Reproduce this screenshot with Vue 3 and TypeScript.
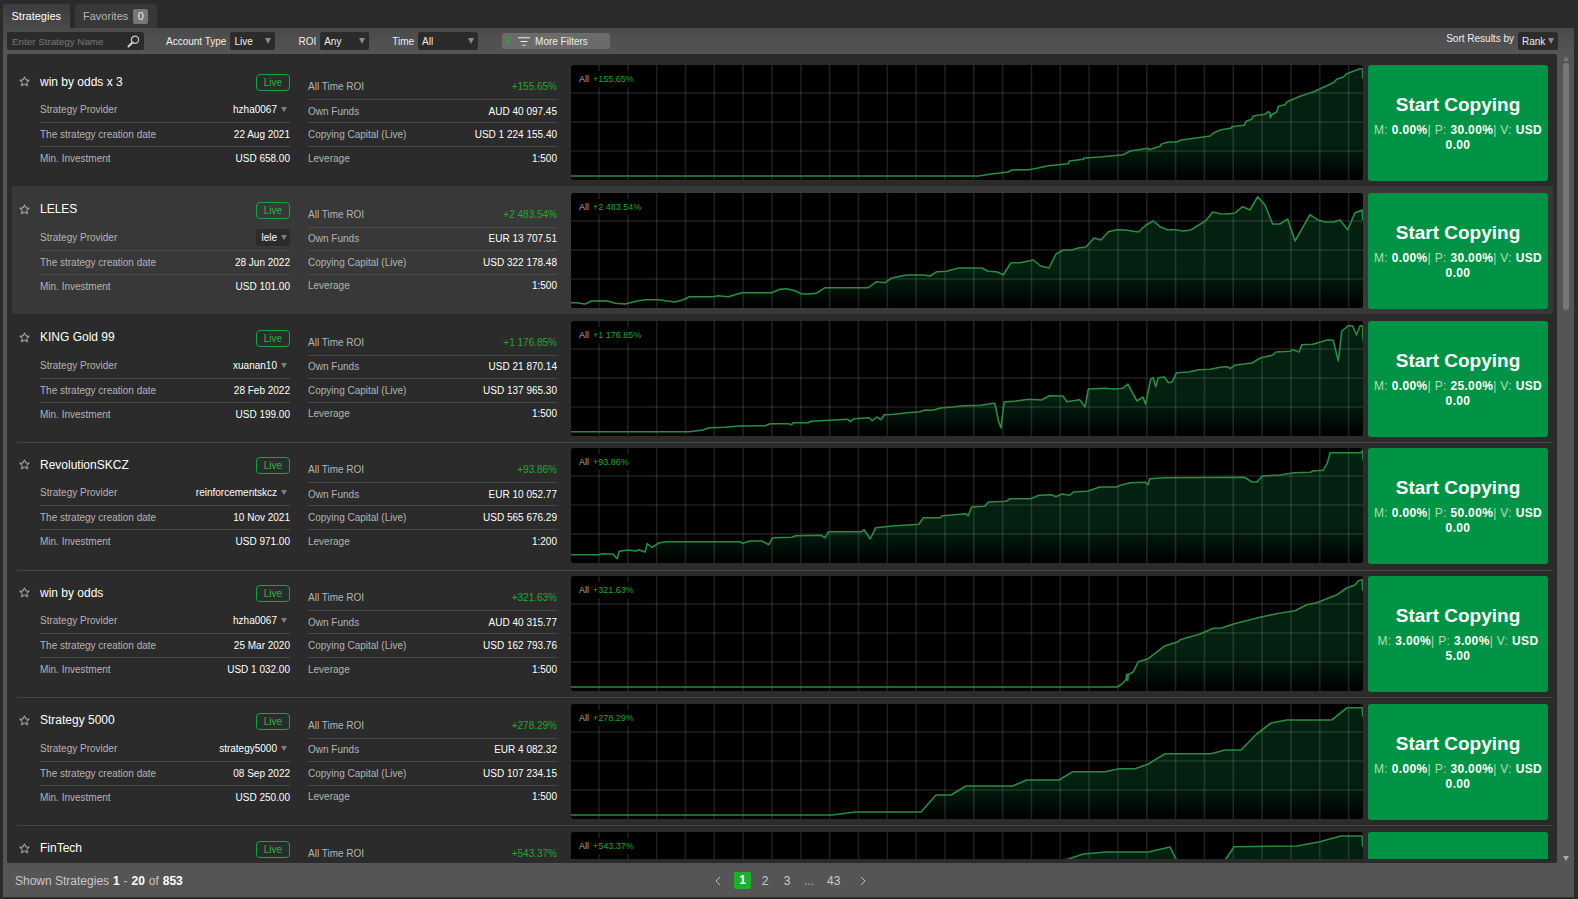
<script setup lang="ts">
type Pt = [number, number]

const seg = (s: string, sx: number, ox: number, sy: number, oy: number): Pt[] =>
  s.split(';').map((p) => {
    const [a, b] = p.split(',').map(Number)
    return [a / sx + ox, b / sy + oy] as Pt
  })

const line1: Pt[] = [
  [0, 111],
  ...seg('0,342;55,342;100,335;145,330;155,324;205,323;235,318;265,311;325,305;328,297;370,292;372,288;420,285;490,278;510,267;565,259;568,263;600,253;605,246;625,240;650,240;660,235;750,222;762,212;780,204;815,198;815,194;852,190;858,178;875,172;880,162;915,157;925,149;930,152;931,168;935,158;950,150;955,133;975,128;980,120;1020,103;1065,88;1085,78;1120,62;1130,52;1150,45;1160,35;1200,20;1208,20;1208,50', 3, 389, 3, -3)
]
const line2: Pt[] = [
  ...seg('0,338;20,338;45,342;65,333;110,332;135,340;165,342;205,332;230,329;265,329;315,336;340,329;358,320;430,320;445,317;475,320;515,308;605,308;630,298;650,296;675,302;695,312;720,312;740,309;765,293;895,293;920,275;945,278;965,264;1010,255;1060,255;1080,258;1100,245;1130,244;1165,234;1235,234;1255,244;1280,245;1300,254', 3, -1, 3, -3),
  ...seg('33,248;60,248;100,240;122,258;147,264;168,222;190,210;215,210;235,204;258,201;282,174;303,180;325,155;350,149;375,150;415,156;438,135;460,123;480,140;502,149;525,149;550,153;572,150;617,122;638,96;660,101;683,102;705,99;728,80;750,90;773,50;795,75;818,132;840,132;863,117;885,183;930,104;952,119;975,126;1000,126;1020,120;1043,149;1065,98;1087,90;1088,120', 3, 429, 3, -13)
]
const line3 = seg('2,332;235,332;262,327;275,320;305,319;335,315;385,314;395,308;430,308;437,311;440,305;470,305;475,301;530,296;548,295;553,302;560,293;590,290;596,299;605,288;613,296;620,281;640,280;660,276;690,272;700,267;715,268;730,261;760,257;775,254;810,253;835,247;838,248;845,300;850,321;856,243;880,240;905,235;930,237;945,224;972,225;980,242;1005,236;1016,258;1022,204;1055,202;1075,204;1090,202;1100,189;1118,240;1130,228;1135,250;1145,175;1150,170;1155,197;1160,170;1172,168;1180,185;1188,182;1196,155;1220,153;1240,146;1262,145;1285,138;1297,137;1302,143;1310,133;1345,126;1362,110;1385,103;1392,93;1420,91;1425,86;1438,93;1443,71;1465,70;1495,56;1505,58;1515,120;1522,30;1535,14;1543,14;1551,42;1558,14;1563,14;1564,60', 1.972, -1, 3, 0)
const line4 = seg('2,323;55,323;65,320;85,322;93,335;97,313;115,309;130,312;135,308;148,315;152,290;162,301;175,288;190,284;335,284;340,289;355,282;378,282;392,293;400,272;438,271;445,266;495,265;503,272;510,254;575,254;580,248;592,276;603,242;635,237;688,232;697,212;730,212;735,206;780,200;785,207;792,180;818,178;825,165;860,163;868,155;908,155;925,145;950,143;958,149;970,141;985,145;993,135;1020,133;1045,120;1078,120;1085,115;1105,107;1135,106;1140,113;1143,95;1172,92;1330,91;1345,105;1355,105;1365,87;1400,84;1428,77;1460,76;1465,72;1485,70;1493,50;1499,17;1560,17;1563,10;1564,40', 1.972, -1, 3, -1)
const line5: Pt[] = [
  [0, 111],
  ...seg('0,339;352,339;365,330;378,318;380,300;383,320;385,302;400,293;415,263;445,254;495,215;535,203;540,197;600,180;640,163;665,162;700,150;780,130;825,120;885,110;920,92;950,86;995,68;1008,64;1040,42;1065,33;1075,20;1087,17;1088,50', 3, 429, 3, -2)
]
const line6: Pt[] = [
  [0, 111],
  [261, 111],
  [284, 108],
  ...seg('0,336;183,336;228,285;273,285;318,258;458,258;500,240;597,240;638,215;735,215;778,206;825,206;865,192;915,161;1052,161;1095,150;1143,150;1190,102;1233,69;1280,60;1415,60;1462,23;1507,23;1508,50', 3, 289, 3, -4)
]
const line7: Pt[] = [
  [0, 100],
  [300, 70],
  ...seg('625,477;670,462;740,456;865,456;930,441;948,477;1020,520;1098,477;1122,440;1310,438;1380,425;1442,408;1507,408;1508,440', 3, 289, 3, -132)
]

interface Strategy {
  name: string
  provider: string
  created: string
  minInv: string
  roi: string
  funds: string
  capital: string
  leverage: string
  m: string
  p: string
  v: string
  line: Pt[]
  hover?: boolean
}

const strategies: Strategy[] = [
  { name: 'win by odds x 3', provider: 'hzha0067', created: '22 Aug 2021', minInv: 'USD 658.00', roi: '+155.65%', funds: 'AUD 40 097.45', capital: 'USD 1 224 155.40', leverage: '1:500', m: '0.00%', p: '30.00%', v: 'USD 0.00', line: line1 },
  { name: 'LELES', provider: 'lele', created: '28 Jun 2022', minInv: 'USD 101.00', roi: '+2 483.54%', funds: 'EUR 13 707.51', capital: 'USD 322 178.48', leverage: '1:500', m: '0.00%', p: '30.00%', v: 'USD 0.00', line: line2, hover: true },
  { name: 'KING Gold 99', provider: 'xuanan10', created: '28 Feb 2022', minInv: 'USD 199.00', roi: '+1 176.85%', funds: 'USD 21 870.14', capital: 'USD 137 965.30', leverage: '1:500', m: '0.00%', p: '25.00%', v: 'USD 0.00', line: line3 },
  { name: 'RevolutionSKCZ', provider: 'reinforcementskcz', created: '10 Nov 2021', minInv: 'USD 971.00', roi: '+93.86%', funds: 'EUR 10 052.77', capital: 'USD 565 676.29', leverage: '1:200', m: '0.00%', p: '50.00%', v: 'USD 0.00', line: line4 },
  { name: 'win by odds', provider: 'hzha0067', created: '25 Mar 2020', minInv: 'USD 1 032.00', roi: '+321.63%', funds: 'AUD 40 315.77', capital: 'USD 162 793.76', leverage: '1:500', m: '3.00%', p: '3.00%', v: 'USD 5.00', line: line5 },
  { name: 'Strategy 5000', provider: 'strategy5000', created: '08 Sep 2022', minInv: 'USD 250.00', roi: '+278.29%', funds: 'EUR 4 082.32', capital: 'USD 107 234.15', leverage: '1:500', m: '0.00%', p: '30.00%', v: 'USD 0.00', line: line6 },
  { name: 'FinTech', provider: 'fintech', created: '12 May 2022', minInv: 'USD 300.00', roi: '+543.37%', funds: 'USD 9 120.00', capital: 'USD 98 410.00', leverage: '1:500', m: '0.00%', p: '30.00%', v: 'USD 0.00', line: line7 }
]

const toLine = (pts: Pt[]) => pts.map((p) => `${p[0].toFixed(1)},${p[1].toFixed(1)}`).join(' ')
const toArea = (pts: Pt[]) => `${pts[0][0].toFixed(1)},115 ${toLine(pts)} ${pts[pts.length - 1][0].toFixed(1)},115`

const vLines = Array.from({ length: 27 }, (_, i) => 28 + i * 28.83)
const hLines = [28, 57, 86]
</script>

<template>
  <div class="page">
    <div class="tabs">
      <div class="tab active">Strategies</div>
      <div class="tab">Favorites <span class="badge">0</span></div>
    </div>

    <div class="panel">
      <div class="toolbar">
        <div class="search">
          <span>Enter Strategy Name</span>
          <svg class="search-icon" viewBox="0 0 14 14" width="13" height="13">
            <circle cx="8.6" cy="5.2" r="3.9" fill="none" stroke="#ccc" stroke-width="1.3" />
            <path d="M5.8 8.1 1.6 12.4" stroke="#ccc" stroke-width="2.2" stroke-linecap="round" />
          </svg>
        </div>
        <label class="lbl first">Account Type</label>
        <div class="select w45">Live<i class="tri"></i></div>
        <label class="lbl second">ROI</label>
        <div class="select w49">Any<i class="tri"></i></div>
        <label class="lbl third">Time</label>
        <div class="select w60">All<i class="tri"></i></div>
        <div class="more">
          <i class="dot"></i>
          <svg viewBox="0 0 12 9" width="12" height="9" class="filter">
            <path d="M0 .75h12M2.5 4.5h7M4.5 8.25h3" stroke="#eee" stroke-width="1.1" />
          </svg>
          <span>More Filters</span>
        </div>
        <div class="spacer"></div>
        <label class="lbl sort">Sort Results by</label>
        <div class="select w40">Rank<i class="tri"></i></div>
      </div>

      <div class="body">
        <div class="list">
          <div class="clip">
            <div v-for="(s, i) in strategies" :key="s.name" class="row" :class="{ hover: s.hover }">
              <div class="star-col">
                <svg viewBox="0 0 12 12" width="11" height="11">
                  <path d="M6 .9 7.5 4.3l3.7.35-2.8 2.45.85 3.6L6 8.8l-3.25 1.9.85-3.6L.8 4.65l3.7-.35z" fill="none" stroke="#c4c4c4" stroke-width="1" stroke-linejoin="round" />
                </svg>
              </div>

              <div class="info">
                <div class="title-line">
                  <span class="name">{{ s.name }}</span>
                  <span class="live">Live</span>
                </div>
                <div class="line provider">
                  <span>Strategy Provider</span>
                  <b class="prov-val">{{ s.provider }}<i class="tri small"></i></b>
                </div>
                <div class="line">
                  <span>The strategy creation date</span>
                  <b>{{ s.created }}</b>
                </div>
                <div class="line last">
                  <span>Min. Investment</span>
                  <b>{{ s.minInv }}</b>
                </div>
              </div>

              <div class="stats">
                <div class="line roi-line">
                  <span>All Time ROI</span>
                  <b class="green">{{ s.roi }}</b>
                </div>
                <div class="line funds-line">
                  <span>Own Funds</span>
                  <b>{{ s.funds }}</b>
                </div>
                <div class="line">
                  <span>Copying Capital (Live)</span>
                  <b>{{ s.capital }}</b>
                </div>
                <div class="line last lev-line">
                  <span>Leverage</span>
                  <b>{{ s.leverage }}</b>
                </div>
              </div>

              <div class="chart">
                <svg viewBox="0 0 792 115" width="792" height="115">
                  <defs>
                    <linearGradient :id="`area${i}`" x1="0" y1="0" x2="0" y2="115" gradientUnits="userSpaceOnUse">
                      <stop offset="0" stop-color="#032010" />
                      <stop offset="0.68" stop-color="#032010" />
                      <stop offset="1" stop-color="#000" />
                    </linearGradient>
                  </defs>
                  <polygon :points="toArea(s.line)" :fill="`url(#area${i})`" />
                  <line v-for="x in vLines" :key="x" :x1="x" :x2="x" y1="0" y2="115" class="grid" />
                  <line v-for="y in hLines" :key="y" x1="0" x2="792" :y1="y" :y2="y" class="grid" />
                  <polyline :points="toLine(s.line)" class="curve" />
                </svg>
                <div class="legend">
                  <span class="all">All</span>
                  <span class="pct">{{ s.roi }}</span>
                </div>
              </div>

              <div class="copy">
                <div class="copy-title">Start Copying</div>
                <div class="copy-sub">
                  <span>M: </span><b>{{ s.m }}</b><span>| P: </span><b>{{ s.p }}</b><span>| V: </span><b>{{ s.v }}</b>
                </div>
              </div>
            </div>
          </div>
        </div>

        <div class="scrollbar">
          <i class="arrow up"></i>
          <div class="thumb"></div>
          <i class="arrow down"></i>
        </div>
      </div>

      <div class="footer">
        <div class="shown">Shown Strategies <b>1</b> - <b>20</b> of <b>853</b></div>
        <div class="pager">
          <svg viewBox="0 0 6 10" width="6" height="10"><path d="M5 1 1 5l4 4" fill="none" stroke="#bbb" stroke-width="1" /></svg>
          <span class="page-no current">1</span>
          <span class="page-no">2</span>
          <span class="page-no">3</span>
          <span class="page-no dots">...</span>
          <span class="page-no wide">43</span>
          <svg viewBox="0 0 6 10" width="6" height="10"><path d="m1 1 4 4-4 4" fill="none" stroke="#bbb" stroke-width="1" /></svg>
        </div>
      </div>
    </div>
  </div>
</template>

<style>
html,
body {
  margin: 0;
  background: #2b2b2b;
}
</style>

<style scoped>
.page {
  height: 899px;
  width: 1578px;
  overflow: hidden;
  display: flex;
  flex-direction: column;
  background: #2b2b2b;
  font-family: "Liberation Sans", Arial, sans-serif;
  font-size: 10px;
  color: #fff;
}

/* tabs */
.tabs {
  height: 28px;
  flex: none;
  display: flex;
  align-items: flex-end;
  gap: 5px;
  padding-left: 3px;
}
.tab {
  height: 24px;
  box-sizing: border-box;
  padding: 0 8.5px;
  display: flex;
  align-items: center;
  gap: 5px;
  font-size: 11px;
  color: #b5b5b5;
  background: #383838;
  border-radius: 3px 3px 0 0;
}
.tab.active {
  color: #fff;
  background: linear-gradient(#3c3c3c, #4a4a4a);
}
.badge {
  width: 15px;
  height: 15px;
  display: flex;
  align-items: center;
  justify-content: center;
  font-size: 11px;
  color: #eee;
  background: #777;
  border-radius: 2px;
}

/* panel */
.panel {
  flex: none;
  height: 869px;
  margin-left: 3px;
  width: 1571px;
  display: flex;
  flex-direction: column;
  background: #555;
  border-radius: 3px 3px 0 0;
}
.toolbar {
  height: 26px;
  flex: none;
  box-sizing: border-box;
  padding: 4px 16px 4px 4px;
  display: flex;
  align-items: center;
  background: linear-gradient(#4a4a4a, #555);
  border-radius: 3px 3px 0 0;
}
.search {
  width: 137px;
  height: 18px;
  box-sizing: border-box;
  padding-left: 5px;
  display: flex;
  align-items: center;
  color: #777;
  font-size: 9.8px;
  background: #2b2b2b;
  border-radius: 2px;
  position: relative;
}
.search-icon {
  position: absolute;
  right: 4px;
  top: 3px;
}
.lbl {
  color: #eee;
}
.lbl.first {
  margin: 0 4px 0 22px;
}
.lbl.second {
  margin: 0 4px 0 23px;
}
.lbl.third {
  margin: 0 4px 0 23px;
}
.lbl.sort {
  margin: -5px 4px 0 0;
}
.select {
  height: 18px;
  box-sizing: border-box;
  padding-left: 4px;
  display: flex;
  align-items: center;
  color: #eee;
  background: #2b2b2b;
  border-radius: 2px;
  position: relative;
}
.w45 {
  width: 45px;
}
.w49 {
  width: 49px;
}
.w60 {
  width: 60px;
}
.w40 {
  width: 40px;
}
.tri {
  position: absolute;
  right: 4px;
  top: 6px;
  width: 0;
  height: 0;
  border-left: 3.5px solid transparent;
  border-right: 3.5px solid transparent;
  border-top: 6px solid #8a8a8a;
}
.more {
  width: 108px;
  height: 16px;
  box-sizing: border-box;
  margin-left: 24px;
  padding-left: 4px;
  display: flex;
  align-items: center;
  color: #eee;
  background: #6b6b6b;
  border-radius: 2px;
}
.dot {
  width: 4px;
  height: 4px;
  border-radius: 50%;
  background: #1fa833;
}
.filter {
  margin: 0 5px 0 8px;
}
.spacer {
  flex: 1;
}

/* list */
.body {
  flex: 1;
  min-height: 0;
  display: flex;
  padding-left: 4px;
}
.list {
  width: 1550px;
  flex: none;
  box-sizing: border-box;
  padding: 4px 4px 4px 5px;
  background: #2b2b2b;
  border-radius: 2px;
}
.clip {
  height: 100%;
  overflow: hidden;
}
.row {
  height: 127.8px;
  box-sizing: border-box;
  padding: 7px 5px 0 0;
  display: flex;
  align-items: flex-start;
  border-radius: 2px;
  position: relative;
}
.row::after {
  content: "";
  position: absolute;
  left: 5px;
  right: 0;
  bottom: -1.4px;
  height: 1px;
  background: #454545;
}
.row.hover {
  background: #383838;
}
.row.hover::after {
  display: none;
}
.star-col {
  width: 28px;
  flex: none;
  padding: 11px 0 0 7px;
  box-sizing: border-box;
  line-height: 0;
}
.info {
  width: 250px;
  flex: none;
  padding-top: 9px;
}
.title-line {
  height: 17px;
  display: flex;
  align-items: center;
  justify-content: space-between;
}
.name {
  font-size: 12px;
  color: #fff;
  margin-bottom: 2px;
}
.live {
  width: 34px;
  height: 17px;
  box-sizing: border-box;
  display: flex;
  align-items: center;
  justify-content: center;
  color: #1fb84a;
  border: 1px solid #0aa84a;
  border-radius: 4px;
}
.line {
  height: 24px;
  box-sizing: border-box;
  display: flex;
  align-items: center;
  justify-content: space-between;
  color: #b4b4b4;
  border-bottom: 1px solid #4a4a4a;
}
.line.last {
  border-bottom: 0;
  padding-bottom: 1px;
}
.line b {
  font-weight: normal;
  color: #fff;
}
.line b.green {
  color: #22a82e;
}
.provider {
  height: 22px;
  margin-top: 10px;
  padding-bottom: 4px;
  align-items: flex-start;
}
.provider span {
  line-height: 17px;
}
.prov-val {
  height: 17px;
  box-sizing: border-box;
  padding: 0 13px 0 5px;
  display: flex;
  align-items: center;
  border-radius: 3px;
  position: relative;
}
.hover .prov-val {
  background: #2b2b2b;
}
.tri.small {
  right: 3px;
  top: 6px;
  border-left-width: 3px;
  border-right-width: 3px;
  border-top-width: 5px;
  border-top-color: #808080;
}
.stats {
  width: 249px;
  flex: none;
  margin-left: 18px;
  padding-top: 10px;
}
.roi-line {
  height: 25px;
  padding-bottom: 1px;
}
.funds-line {
  height: 23px;
}
.line.lev-line {
  padding-bottom: 2px;
}
.chart {
  width: 792px;
  height: 115px;
  flex: none;
  margin-left: 14px;
  background: #000;
  border-radius: 3px;
  overflow: hidden;
  position: relative;
}
.chart svg {
  display: block;
}
.grid {
  stroke: #fff;
  stroke-opacity: 0.12;
  stroke-width: 1.6;
}
.curve {
  fill: none;
  stroke: #2a8c42;
  stroke-width: 1.6;
  stroke-linejoin: round;
}
.legend {
  position: absolute;
  left: 4px;
  top: 6px;
  height: 16px;
  padding: 0 4px;
  display: flex;
  align-items: center;
  gap: 4px;
  font-size: 9px;
  background: #000;
}
.all {
  color: #aaa;
}
.pct {
  color: #1ca82e;
}
.copy {
  width: 180px;
  height: 116px;
  flex: none;
  margin-left: 5px;
  box-sizing: border-box;
  padding: 28px 6px 0;
  text-align: center;
  background: #009245;
  border-radius: 3px;
}
.copy-title {
  font-size: 19px;
  font-weight: bold;
  line-height: 24px;
}
.copy-sub {
  margin-top: 6px;
  font-size: 12px;
  line-height: 15px;
  letter-spacing: 0.35px;
  color: #a8e0bc;
}
.copy-sub b {
  color: #fff;
}

/* scrollbar */
.scrollbar {
  flex: 1;
  position: relative;
}
.thumb {
  position: absolute;
  left: 6px;
  top: 9px;
  width: 6px;
  height: 247px;
  background: #777;
  border-radius: 3px;
}
.arrow {
  position: absolute;
  left: 6px;
  width: 0;
  height: 0;
  border-left: 3px solid transparent;
  border-right: 3px solid transparent;
}
.arrow.up {
  top: 2px;
  border-bottom: 5px solid #777;
}
.arrow.down {
  bottom: 2px;
  border-top: 5px solid #aaa;
}

/* footer */
.footer {
  height: 34px;
  flex: none;
  box-sizing: border-box;
  padding: 1px 0 0 12px;
  display: flex;
  align-items: center;
  font-size: 12px;
  color: #c8c8c8;
  position: relative;
}
.shown b {
  color: #fff;
  margin: 0 0.6px;
}
.pager {
  position: absolute;
  left: 712px;
  top: 9px;
  height: 17px;
  display: flex;
  align-items: center;
  gap: 12px;
}
.page-no {
  min-width: 10px;
  text-align: center;
  color: #ccc;
}
.page-no.current {
  width: 17px;
  height: 17px;
  line-height: 17px;
  margin: 0 -3px 0 1px;
  color: #fff;
  font-weight: bold;
  background: #1eb02c;
  border-radius: 2px;
}
.page-no.dots {
  color: #bbb;
}
.page-no.wide {
  margin: 0 8px 0 1px;
}
</style>
